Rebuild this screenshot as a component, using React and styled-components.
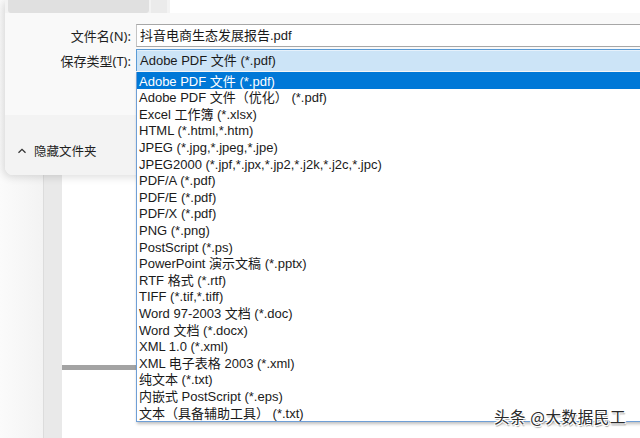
import React from 'react';
import styled, { createGlobalStyle } from 'styled-components';

const GlobalStyle = createGlobalStyle`
  html, body {
    margin: 0;
    padding: 0;
    background: #fff;
  }
  body {
    font-family: "Liberation Sans", "Noto Sans CJK SC", sans-serif;
    color: #1a1a1a;
  }
`;

const fileTypes = [
  'Adobe PDF 文件 (*.pdf)',
  'Adobe PDF 文件（优化） (*.pdf)',
  'Excel 工作簿 (*.xlsx)',
  'HTML (*.html,*.htm)',
  'JPEG (*.jpg,*.jpeg,*.jpe)',
  'JPEG2000 (*.jpf,*.jpx,*.jp2,*.j2k,*.j2c,*.jpc)',
  'PDF/A (*.pdf)',
  'PDF/E (*.pdf)',
  'PDF/X (*.pdf)',
  'PNG (*.png)',
  'PostScript (*.ps)',
  'PowerPoint 演示文稿 (*.pptx)',
  'RTF 格式 (*.rtf)',
  'TIFF (*.tif,*.tiff)',
  'Word 97-2003 文档 (*.doc)',
  'Word 文档 (*.docx)',
  'XML 1.0 (*.xml)',
  'XML 电子表格 2003 (*.xml)',
  '纯文本 (*.txt)',
  '内嵌式 PostScript (*.eps)',
  '文本（具备辅助工具） (*.txt)'
];

const Screen = styled.div`
  position: relative;
  width: 640px;
  height: 438px;
  overflow: hidden;
  background: #fff;
`;

/* document window behind the dialog */
const Backdrop = styled.div`
  display: grid;
  grid-template-columns: 43px 1px 18px 1fr;
  height: 100%;
`;

const Shade = styled.div`
  background: linear-gradient(to right, #fbfbfb, #f3f3f3);
`;

const Rule = styled.div`
  background: #dcdcdc;
`;

const Band = styled.div`
  background: #e9e9e9;
`;

const Page = styled.div`
  background: #fff;
  padding-top: 365px;
`;

const PageBar = styled.div`
  width: 75px;
  height: 5px;
  background: #a3a3a3;
`;

/* save dialog */
const Dialog = styled.div`
  position: absolute;
  left: 5px;
  top: 0;
  width: 660px;
  height: 175px;
  background: #f9f9f9;
  border-bottom-left-radius: 8px;
  box-shadow: -2px 2px 8px rgba(0, 0, 0, 0.14);
  display: flex;
  flex-direction: column;
  overflow: hidden;
`;

const NavStrip = styled.div`
  display: flex;
  height: 13px;
  background: #f3f3f3;
  padding-left: 3px;
`;

const NavItem = styled.div`
  width: 141px;
  background: #e0e0e0;
  border-bottom-left-radius: 3px;
  border-bottom-right-radius: 3px;
`;

const NavScroll = styled.div`
  width: 16px;
  margin-left: 2px;
  background: #ebebeb;
`;

const NavContent = styled.div`
  flex: 1;
  margin-left: 3px;
  background: #fff;
`;

const Form = styled.div`
  display: grid;
  grid-template-columns: 126px 1fr;
  column-gap: 5px;
  row-gap: 2px;
  padding-top: 11px;
  align-items: center;
  height: 102px;
  align-content: start;
  box-sizing: border-box;
`;

const Label = styled.div`
  font-family: "Noto Sans", "Noto Sans CJK SC", sans-serif;
  font-size: 13px;
  text-align: right;
  color: #1f1f1f;
  white-space: nowrap;
`;

const TextField = styled.div`
  height: 21px;
  border-top: 1px solid #a7a7a7;
  border-bottom: 1px solid #a7a7a7;
  border-left: 1px solid #c4c4c4;
  background: #fff;
  font-size: 13px;
  line-height: 21px;
  padding-left: 3px;
  white-space: nowrap;
`;

const Combo = styled.div`
  height: 21px;
  border-top: 1px solid #5b9bd5;
  border-left: 1px solid #5b9bd5;
  box-shadow: inset 0 1px 0 #e6f1fb;
  background: #cce4f7;
  font-size: 13px;
  line-height: 21px;
  padding-left: 3px;
  white-space: nowrap;
`;

const Footer = styled.div`
  flex: 1;
  background: #f3f3f3;
  display: flex;
  align-items: center;
  gap: 7px;
  padding: 11px 0 0 12px;
  font-family: "Noto Sans CJK SC", sans-serif;
  font-size: 12.5px;
  color: #1f1f1f;
`;

/* open dropdown */
const DropList = styled.ul`
  position: absolute;
  left: 136px;
  top: 72px;
  width: 520px;
  height: 349px;
  margin: 0;
  padding: 0;
  list-style: none;
  background: #fff;
  border: 1px solid #6f9fd6;
  border-top: none;
  box-shadow: 1px 2px 3px rgba(0, 0, 0, 0.25);
  display: flex;
  flex-direction: column;
`;

const Option = styled.li`
  height: 15.12px;
  padding-top: 1.5px;
  line-height: 15.12px;
  padding-left: 2px;
  font-size: 13px;
  white-space: nowrap;
  background: ${p => (p.$active ? '#0078d7' : 'transparent')};
  color: ${p => (p.$active ? '#fff' : '#1a1a1a')};
`;

const Watermark = styled.div`
  position: absolute;
  right: 14px;
  bottom: 13px;
  font-size: 15.5px;
  letter-spacing: 0.6px;
  color: #2a2a2a;
  line-height: 18px;
  text-shadow: 1px 1px 0 #fff, -1px -1px 0 #fff, 1px -1px 0 #fff, -1px 1px 0 #fff,
    1px 2px 1px rgba(0, 0, 0, 0.35);
  font-family: "Noto Sans CJK SC", sans-serif;
`;

const ChevronUp = () => (
  <svg width="10" height="10" viewBox="0 0 10 10" fill="none">
    <path d="M1.5 6.8 L5 3.3 L8.5 6.8" stroke="#333" strokeWidth="1.3" />
  </svg>
);

const App = () => (
  <Screen>
    <GlobalStyle />
    <Backdrop>
      <Shade />
      <Rule />
      <Band />
      <Page>
        <PageBar />
      </Page>
    </Backdrop>

    <Dialog>
      <NavStrip>
        <NavItem />
        <NavScroll />
        <NavContent />
      </NavStrip>
      <Form>
        <Label>文件名(N):</Label>
        <TextField>抖音电商生态发展报告.pdf</TextField>
        <Label>保存类型(T):</Label>
        <Combo>Adobe PDF 文件 (*.pdf)</Combo>
      </Form>
      <Footer>
        <ChevronUp />
        <span>隐藏文件夹</span>
      </Footer>
    </Dialog>

    <DropList>
      {fileTypes.map((t, i) => (
        <Option key={t} $active={i === 0}>
          {t}
        </Option>
      ))}
    </DropList>

    <Watermark>头条 @大数据民工</Watermark>
  </Screen>
);

export default App;
